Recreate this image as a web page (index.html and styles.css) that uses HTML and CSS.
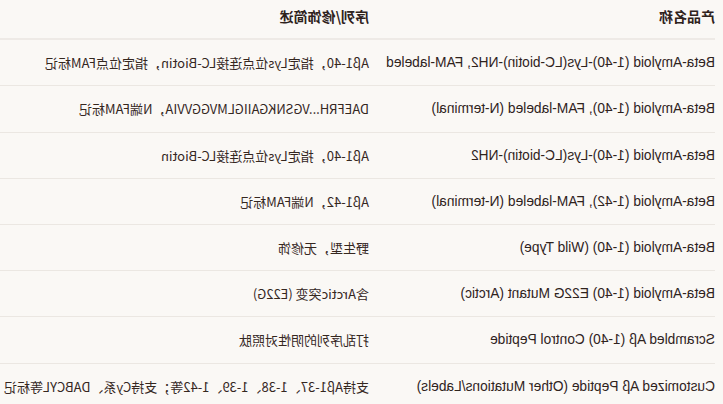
FILE: index.html
```html
<!DOCTYPE html>
<html lang="zh">
<head>
<meta charset="utf-8">
<link rel="stylesheet" href="styles.css">
</head>
<body>
<table class="spec">
  <thead>
    <tr><th class="c-name">产品名称</th><th class="c-desc">序列/修饰简述</th></tr>
  </thead>
  <tbody>
    <tr><td class="name">Beta-Amyloid (1-40)-Lys(LC-biotin)-NH2, FAM-labeled</td><td class="desc">Aβ1-40，指定Lys位点连接LC-Biotin，指定位点FAM标记</td></tr>
    <tr><td class="name">Beta-Amyloid (1-40), FAM-labeled (N-terminal)</td><td class="desc">DAEFRH...VGSNKGAIIGLMVGGVVIA，N端FAM标记</td></tr>
    <tr><td class="name">Beta-Amyloid (1-40)-Lys(LC-biotin)-NH2</td><td class="desc">Aβ1-40，指定Lys位点连接LC-Biotin</td></tr>
    <tr><td class="name">Beta-Amyloid (1-42), FAM-labeled (N-terminal)</td><td class="desc">Aβ1-42，N端FAM标记</td></tr>
    <tr><td class="name">Beta-Amyloid (1-40) (Wild Type)</td><td class="desc">野生型，无修饰</td></tr>
    <tr><td class="name">Beta-Amyloid (1-40) E22G Mutant (Arctic)</td><td class="desc">含Arctic突变 (E22G)</td></tr>
    <tr><td class="name">Scrambled Aβ (1-40) Control Peptide</td><td class="desc">打乱序列的阴性对照肽</td></tr>
    <tr><td class="name">Customized Aβ Peptide (Other Mutations/Labels)</td><td class="desc">支持Aβ1-37、1-38、1-39、1-42等；支持Cy系、DABCYL等标记</td></tr>
  </tbody>
</table>
</body>
</html>
```
FILE: styles.css
```css
html {
  transform: scaleX(-1);
  overflow: hidden;
  background: #faf8f5;
}
body {
  margin: 0 0 0 8px;
  background: #faf8f5;
  color: #3b2c24;
  font-family: "Liberation Sans", "Noto Sans CJK SC", sans-serif;
  font-size: 13px;
  overflow: hidden;
}
.spec {
  width: 100%;
  border-collapse: collapse;
  table-layout: fixed;
}
.spec th {
  text-align: left;
  font-weight: bold;
  font-size: 14px;
  line-height: 19.2px;
  padding: 7px 0 12px;
  border-bottom: 2px solid #eeeae6;
  color: #2e221c;
  font-family: "Noto Sans CJK SC", sans-serif;
}
.spec .c-name { width: 346px; }
.spec td {
  padding: 13px 0;
  line-height: 19.2px;
  border-bottom: 1px solid #ebe7e2;
  white-space: nowrap;
}
.spec .name {
  font-size: 13.75px;
  color: #2f231d;
}
.spec .desc {
  font-family: "Noto Sans CJK SC", sans-serif;
  font-size: 13px;
  color: #35271f;
}
```
